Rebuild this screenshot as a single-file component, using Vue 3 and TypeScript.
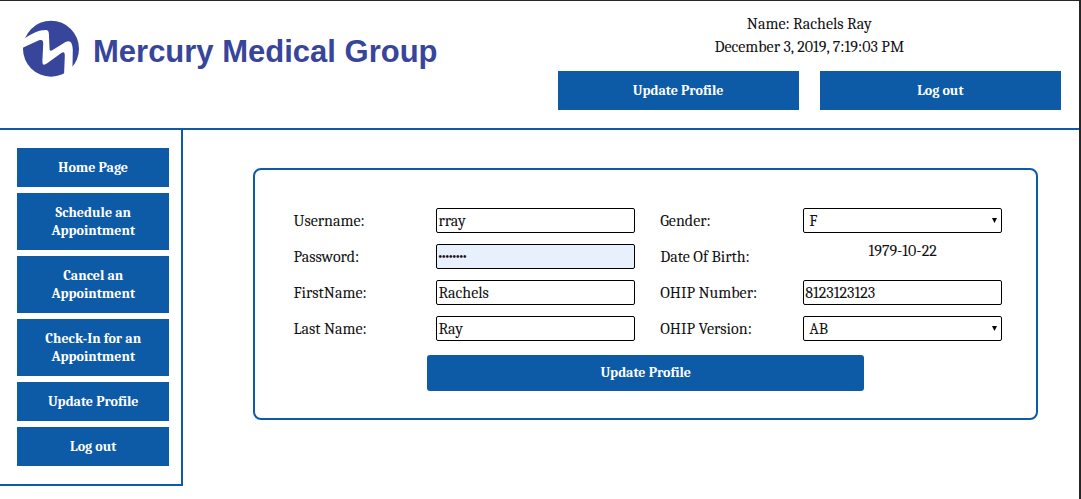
<script setup lang="ts">
import { ref } from 'vue'

const navItems: string[] = [
  'Home Page',
  'Schedule an Appointment',
  'Cancel an Appointment',
  'Check-In for an Appointment',
  'Update Profile',
  'Log out',
]

const username = ref('rray')
const password = ref('rachels1')
const firstName = ref('Rachels')
const lastName = ref('Ray')
const gender = ref('F')
const birthDate = '1979-10-22'
const ohipNumber = ref('8123123123')
const ohipVersion = ref('AB')
</script>

<template>
  <div class="page">
    <header class="header">
      <div class="brand">
        <svg class="brand-mark" viewBox="0 0 66 66" aria-hidden="true">
          <circle cx="33" cy="32.7" r="28" fill="#37459b" />
          <path
            d="M3 24.5 L7.500 21.800 C14 17.500 21 14 27.500 14 C30.500 14 31 16 31 20 L31.500 31.500 C31.500 34.800 32.500 35.500 35 33.800 L47.500 26 C52.500 23.500 54.500 27 54.800 34 L54.500 50.500 L56 60 L46 60 L46.800 40 C46.800 36 45.800 35.500 43 37.300 L29.500 47 C25.500 49.800 24.300 49 24.400 45 L25.200 28 C25.300 24.300 24.300 23.300 21 24.300 L3 32.500 Z"
            fill="#fff"
          />
        </svg>
        <span class="brand-name">Mercury Medical Group</span>
      </div>
      <div class="account">
        <p class="account-line">Name: Rachels Ray</p>
        <p class="account-line">December 3, 2019, 7:19:03 PM</p>
        <div class="account-actions">
          <button type="button" class="btn">Update Profile</button>
          <button type="button" class="btn">Log out</button>
        </div>
      </div>
    </header>

    <div class="body">
      <nav class="sidebar">
        <button v-for="item in navItems" :key="item" type="button" class="btn">{{ item }}</button>
      </nav>

      <main class="main">
        <form class="panel" @submit.prevent>
          <div class="fields">
            <div class="field">
              <label for="username">Username:</label>
              <input id="username" v-model="username" class="control" type="text" />
            </div>
            <div class="field">
              <label for="gender">Gender:</label>
              <div class="select">
                <select id="gender" v-model="gender" class="control">
                  <option>F</option>
                  <option>M</option>
                </select>
                <svg class="arrow" viewBox="0 0 5 5" aria-hidden="true"><path d="M0 0H5L2.500 5Z" /></svg>
              </div>
            </div>
            <div class="field">
              <label for="password">Password:</label>
              <input id="password" v-model="password" class="control secret" type="password" />
            </div>
            <div class="field">
              <span>Date Of Birth:</span>
              <span class="date">{{ birthDate }}</span>
            </div>
            <div class="field">
              <label for="first-name">FirstName:</label>
              <input id="first-name" v-model="firstName" class="control" type="text" />
            </div>
            <div class="field">
              <label for="ohip-number">OHIP Number:</label>
              <input id="ohip-number" v-model="ohipNumber" class="control" type="text" />
            </div>
            <div class="field">
              <label for="last-name">Last Name:</label>
              <input id="last-name" v-model="lastName" class="control" type="text" />
            </div>
            <div class="field">
              <label for="ohip-version">OHIP Version:</label>
              <div class="select">
                <select id="ohip-version" v-model="ohipVersion" class="control">
                  <option>AB</option>
                </select>
                <svg class="arrow" viewBox="0 0 5 5" aria-hidden="true"><path d="M0 0H5L2.500 5Z" /></svg>
              </div>
            </div>
          </div>
          <button type="submit" class="btn submit">Update Profile</button>
        </form>
      </main>
    </div>
  </div>
</template>

<style>
body {
  margin: 0;
}
</style>

<style scoped>
.page {
  box-sizing: border-box;
  min-height: 100vh;
  border-top: 1px solid #262626;
  border-right: 2px solid #262626;
  background: #fff;
  color: #111;
  font-family: Cambria, Caladea, 'Liberation Serif', serif;
  font-size: 16px;
  line-height: 18px;
}

.header {
  display: grid;
  grid-template-columns: 1fr 1fr;
  border-bottom: 2px solid #0d5aa7;
}

.brand {
  display: flex;
  align-items: flex-start;
  gap: 9px;
  padding: 15px 0 0 18px;
}

.brand-mark {
  flex: none;
  width: 66px;
  height: 66px;
}

.brand-name {
  color: #37459b;
  font: bold 31px/72px 'Liberation Sans', Arial, sans-serif;
  white-space: nowrap;
}

.account {
  padding: 12px 18px 18px;
  text-align: center;
}

.account-line {
  margin: 0;
  line-height: 23px;
}

.account-actions {
  display: grid;
  grid-template-columns: 1fr 1fr;
  gap: 21px;
  margin-top: 12px;
}

.btn {
  padding: 11px 16px 10px;
  border: 0;
  background: #0d5aa7;
  color: #fff;
  font: inherit;
  font-size: 14px;
  font-weight: bold;
  line-height: 18px;
  cursor: pointer;
}

.body {
  display: flex;
  align-items: flex-start;
}

.sidebar {
  box-sizing: border-box;
  flex: none;
  display: flex;
  flex-direction: column;
  gap: 6px;
  width: 17%;
  padding: 18px 12px 18px 17px;
  border: solid #0d5aa7;
  border-width: 0 2px 2px 0;
}

.main {
  flex: 1;
  min-width: 0;
  padding: 38px 41px 38px 70px;
}

.panel {
  display: flex;
  flex-direction: column;
  align-items: center;
  gap: 14px;
  padding: 38px 0 27px;
  border: 2px solid #0d5aa7;
  border-radius: 8px;
}

.fields {
  box-sizing: border-box;
  display: grid;
  grid-template-columns: 1fr 1fr;
  gap: 11px 25px;
  width: 100%;
  padding: 0 34px 0 38px;
}

.field {
  display: grid;
  grid-template-columns: 143px minmax(0, 1fr);
  align-items: center;
  height: 25px;
}

.control {
  box-sizing: border-box;
  width: 100%;
  height: 25px;
  padding: 0 1px;
  border: 1px solid #000;
  border-radius: 2px;
  background: #fff;
  color: #111;
  font: inherit;
}

.secret {
  background: #e8f0fe;
  font: bold 10px 'Liberation Serif', serif;
}

.select {
  position: relative;
}

select.control {
  display: block;
  padding: 0 5px;
  appearance: none;
}

.arrow {
  position: absolute;
  top: 10px;
  right: 5px;
  width: 5px;
  height: 5px;
  pointer-events: none;
}

.date {
  align-self: start;
  line-height: 14px;
  text-align: center;
}

.submit {
  width: 56%;
  padding: 9px 16px;
  border-radius: 3px;
}
</style>
